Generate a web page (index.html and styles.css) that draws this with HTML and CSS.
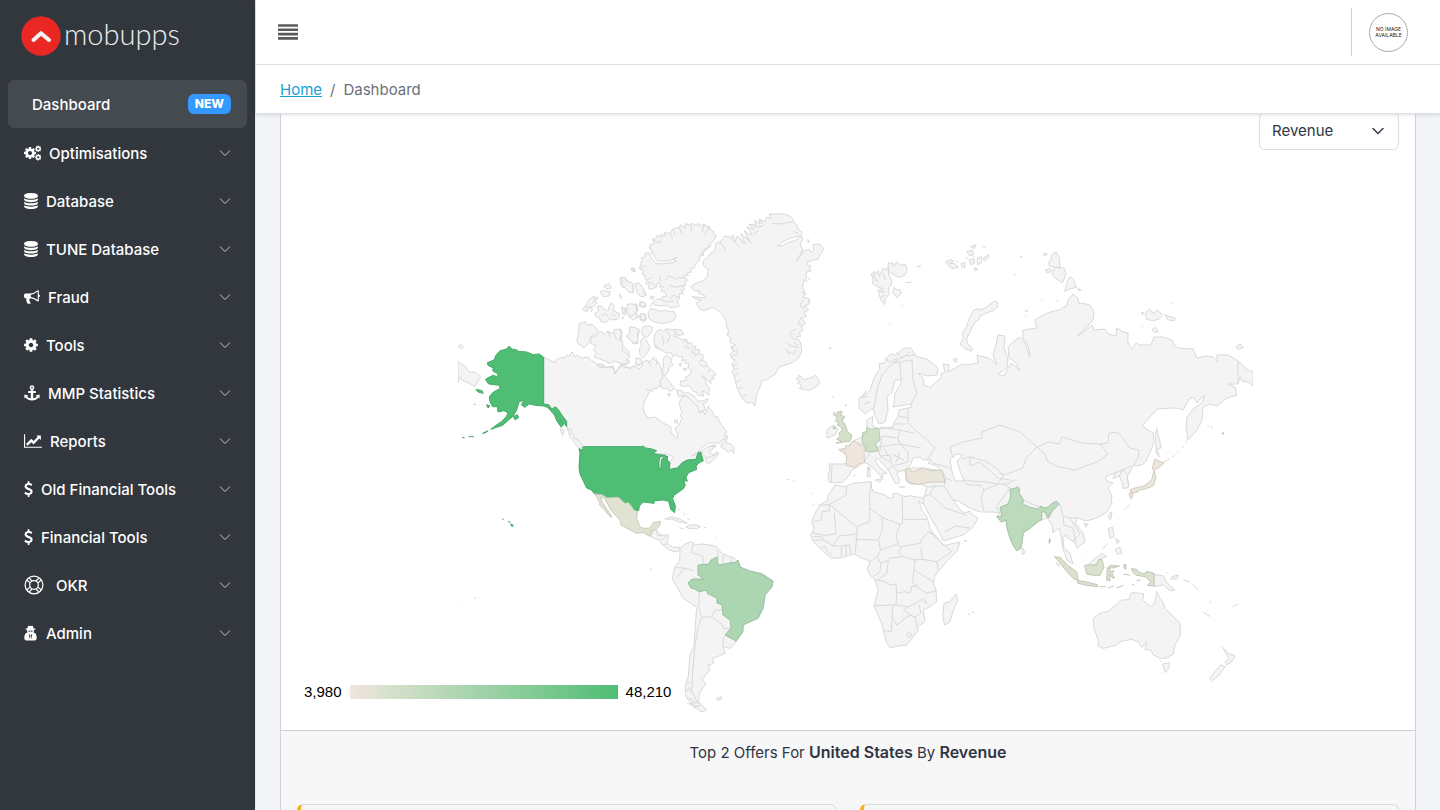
FILE: index.html
```html
<!DOCTYPE html>
<html lang="en">
<head>
<meta charset="utf-8">
<meta name="viewport" content="width=device-width, initial-scale=1">
<title>Mobupps Dashboard</title>
<link rel="stylesheet" href="styles.css">
</head>
<body>
<svg class="defs" aria-hidden="true">
  <symbol id="chev" viewBox="0 0 12 12"><path d="M1 3.500 6 8.500 11 3.500" fill="none" stroke="currentColor" stroke-width="1"/></symbol>
  <symbol id="cog" viewBox="128 0 1536 1792"><path d="M1152 896q0-106-75-181t-181-75-181 75-75 181 75 181 181 75 181-75 75-181zm512-109v222q0 12-8 23t-20 13l-185 28q-19 54-39 91 35 50 107 138 10 12 10 25t-9 23q-27 37-99 108t-94 71q-12 0-26-9l-138-108q-44 23-91 38-16 136-29 186-7 28-36 28h-222q-14 0-24.500-8.500t-11.500-21.500l-28-184q-49-16-90-37l-141 107q-10 9-25 9-14 0-25-11-126-114-165-168-7-10-7-23 0-12 8-23 15-21 51-66.500t54-70.500q-27-50-41-99l-183-27q-13-2-21-12.500t-8-23.500v-222q0-12 8-23t19-13l186-28q14-46 39-92-40-57-107-138-10-12-10-24 0-10 9-23 26-36 98.500-107.500t94.500-71.500q13 0 26 10l138 107q44-23 91-38 16-136 29-186 7-28 36-28h222q14 0 24.500 8.500t11.500 21.500l28 184q49 16 90 37l142-107q9-9 24-9 13 0 25 10 129 119 165 170 7 8 7 22 0 12-8 23-15 21-51 66.500t-54 70.500q26 50 41 98l183 28q13 2 21 12.500t8 23.500z"/></symbol>
  <symbol id="db" viewBox="128 0 1536 1792"><path d="M896 768q237 0 443-43t325-127v170q0 69-103 128t-280 93.500-385 34.500-385-34.500-280-93.500-103-128v-170q119 84 325 127t443 43zm0 768q237 0 443-43t325-127v170q0 69-103 128t-280 93.500-385 34.500-385-34.500-280-93.500-103-128v-170q119 84 325 127t443 43zm0-384q237 0 443-43t325-127v170q0 69-103 128t-280 93.500-385 34.500-385-34.500-280-93.500-103-128v-170q119 84 325 127t443 43zm0-1152q208 0 385 34.500t280 93.500 103 128v128q0 69-103 128t-280 93.500-385 34.500-385-34.500-280-93.500-103-128v-128q0-69 103-128t280-93.500 385-34.500z"/></symbol>
  <symbol id="usd" viewBox="384 0 1024 1792"><path d="M1362 1185q0 153-99.500 263.500t-258.500 136.500v175q0 14-9 23t-23 9h-135q-13 0-22.500-9.500t-9.500-22.500v-175q-66-9-127.500-31t-101.500-44.500-74-48-46.500-37.500-17.500-18q-17-21-2-41l103-135q7-10 23-12 15-2 24 9l2 2q113 99 243 125 37 8 74 8 81 0 142.500-43t61.500-122q0-28-15-53t-33.500-42-58.500-37.500-66-32-80-32.500q-39-16-61.500-25t-61.500-26.500-62.500-31-56.500-35.500-53.500-42.500-43.500-49-35.500-58-21-66.500-8.500-78q0-138 98-242t255-134v-180q0-13 9.500-22.500t22.500-9.500h135q14 0 23 9t9 23v176q57 6 110.500 23t87 33.500 63.500 37.500 39 29 15 14q17 18 5 38l-81 146q-8 15-23 16-14 3-27-7-3-3-14.500-12t-39-26.500-58.500-32-74.500-26-85.500-11.500q-95 0-155 43t-60 111q0 26 8.500 48t29.500 41.500 39.500 33 56 31 60.500 27 70 27.500q53 20 81 31.500t76 35 75.500 42.500 62 50 53 63.500 31.500 76.500 13 94z"/></symbol>
</svg>
<div class="app">
<aside class="sidebar">
  <a class="brand" href="#">
    <svg class="brand-mark" viewBox="0 0 40 40" aria-hidden="true"><circle cx="20" cy="20" r="19.700" fill="#e92824"/><path d="M12.500 24 20 17.200 28 24" fill="none" stroke="#f4f4f4" stroke-width="4" stroke-linecap="round" stroke-linejoin="round"/></svg>
    <span>mobupps</span>
  </a>
  <nav class="nav">
    <a class="item active" href="#"><span class="label">Dashboard</span><span class="badge">NEW</span></a>
    <a class="item" href="#"><svg class="ico w17" viewBox="0 0 17 16"><use href="#cog" x="-0.500" y="1" width="13" height="14"/><use href="#cog" x="11" y="0" width="6.500" height="7.500"/><use href="#cog" x="11" y="8.500" width="6.500" height="7.500"/></svg><span class="label">Optimisations</span><svg class="chev"><use href="#chev"/></svg></a>
    <a class="item" href="#"><svg class="ico w14"><use href="#db"/></svg><span class="label">Database</span><svg class="chev"><use href="#chev"/></svg></a>
    <a class="item" href="#"><svg class="ico w14"><use href="#db"/></svg><span class="label">TUNE Database</span><svg class="chev"><use href="#chev"/></svg></a>
    <a class="item" href="#"><svg class="ico w16" viewBox="0 0 1792 1792"><path d="M1664 640q53 0 90.500 37.500t37.500 90.500-37.500 90.500-90.500 37.500v384q0 52-38 90t-90 38q-417-347-812-380-58 19-91 66t-31 100.500 40 92.500q-20 33-23 65.500t6 58 33.500 55 48 50 61.500 50.500q-29 58-111.500 83t-168.500 11.500-132-55.500q-7-23-29.500-87.500t-32-94.500-23-89-15-101 3.500-98.500 22-110.500h-122q-66 0-113-47t-47-113v-192q0-66 47-113t113-47h480q435 0 896-384 52 0 90 38t38 90v384zm-128 604v-954q-394 302-768 343v270q377 42 768 341z"/></svg><span class="label">Fraud</span><svg class="chev"><use href="#chev"/></svg></a>
    <a class="item" href="#"><svg class="ico w14"><use href="#cog"/></svg><span class="label">Tools</span><svg class="chev"><use href="#chev"/></svg></a>
    <a class="item" href="#"><svg class="ico w16" viewBox="0 0 16 16"><path fill-rule="evenodd" d="M8 .3a2.300 2.300 0 0 1 1.200 4.300V6h2.600v2H9.200v5.300c1.600-.2 2.900-.9 3.500-1.800l-1.100-1.100 4-.9v4l-1.200-1c-1.300 1.900-3.500 3-6.400 3s-5.100-1.100-6.400-3l-1.200 1v-4l4 .9-1.100 1.100c.6.900 1.900 1.600 3.500 1.800V8H4.200V6h2.600V4.600A2.300 2.300 0 0 1 8 .3zm0 1.400a.9.900 0 1 0 0 1.800.9.900 0 0 0 0-1.800z"/></svg><span class="label">MMP Statistics</span><svg class="chev"><use href="#chev"/></svg></a>
    <a class="item" href="#"><svg class="ico w18" viewBox="0 0 2048 1792"><path d="M2048 1536v128h-2048v-1536h128v1408h1920zm-128-1248v435q0 21-19.500 29.500t-35.500-7.500l-121-121-633 633q-10 10-23 10t-23-10l-233-233-416 416-192-192 585-585q10-10 23-10t23 10l233 233 464-464-121-121q-16-16-7.500-35.500t29.500-19.500h435q14 0 23 9t9 23z"/></svg><span class="label">Reports</span><svg class="chev"><use href="#chev"/></svg></a>
    <a class="item" href="#"><svg class="ico w9"><use href="#usd"/></svg><span class="label">Old Financial Tools</span><svg class="chev"><use href="#chev"/></svg></a>
    <a class="item" href="#"><svg class="ico w9"><use href="#usd"/></svg><span class="label">Financial Tools</span><svg class="chev"><use href="#chev"/></svg></a>
    <a class="item okr" href="#"><svg class="ico w20" viewBox="0 0 20 20"><g fill="none" stroke="currentColor" stroke-width="1.200"><circle cx="10" cy="10" r="8.900"/><circle cx="10" cy="10" r="4.300"/><path d="M2.800 5 6 7.900M5 2.800 7.900 6M15 2.800 12.100 6M17.200 5 14 7.900M17.200 15 14 12.100M15 17.200 12.100 14M5 17.200 7.900 14M2.800 15 6 12.100"/></g></svg><span class="label">OKR</span><svg class="chev"><use href="#chev"/></svg></a>
    <a class="item" href="#"><svg class="ico w14" viewBox="0 0 14 16"><path fill-rule="evenodd" d="M4.500.8c.8-.5 1.300.3 2 .3s1.200-.8 2-.3c.6.4.9 1.600 1.100 2.500 1.200.2 2 .5 2 .8s-.8.700-1.700.8v1.700L9.500 7.400c2.300.3 3.200 2.600 3.200 5.700 0 1.600-.8 2.300-2 2.300H2.300c-1.200 0-2-.7-2-2.300 0-3.100.9-5.400 3.200-5.700L3.100 6.600V4.900C2.200 4.800 1.400 4.400 1.400 4.100s.8-.6 2-.8C3.600 2.400 3.900 1.200 4.500.8zM4.200 5.700l.5 1.100h1.100l.7-.8.7.8h1.100l.5-1.100zM4.800 9l.9 5.300.6-3.200L5.700 9.500zM8.200 9l-.9.500-.6 1.600.6 3.200z"/></svg><span class="label">Admin</span><svg class="chev"><use href="#chev"/></svg></a>
  </nav>
</aside>

<div class="wrapper">
  <header class="header">
    <div class="topbar">
      <button class="toggler" type="button" aria-label="Toggle menu"><svg viewBox="0 0 20 16"><path d="M0 1.500h20M0 5.800h20M0 10.100h20M0 14.400h20" stroke="currentColor" stroke-width="2.600"/></svg></button>
      <div class="account"><button class="avatar" type="button">NO IMAGE<br>AVAILABLE</button></div>
    </div>
    <nav class="crumbs" aria-label="Breadcrumb"><a href="#">Home</a><span class="sep">/</span><span>Dashboard</span></nav>
  </header>

  <main class="content">
    <section class="card">
      <div class="card-body">
        <select class="metric" aria-label="Metric"><option>Revenue</option></select>
        <div class="map">
<svg class="world" viewBox="297 150 1102 564" role="img" aria-label="Revenue by country">
<defs><clipPath id="edge"><path d="M458 213h795v501H458z"/></clipPath></defs>
<g clip-path="url(#edge)">
<!-- Canada, mainland -->
<path class="land" d="M543.700 357.300 548 359 555 362.500 556 360 562 357 564 358 567 355 569 356 572 352 575 357 577 355 581 358 588 357 592 361 595 362 597 365 600 367 610 367 613 368 615 374 617 370 620 365 624 367 630 368 634 366 640 369 643 362 647 360 650 362 653 358 656 361 659 363 662 372 663 380 661 388 659 385 657 389 653 388 649 393 645 400 643 408 645 414 648 418 655 417 663 423 671 427 671 433 674 435 677 439 678 435 675 428 679 425 682 418 680 415 682 412 679 403 681 399 683 396 688 396 692 398 697 405 700 413 703 411 705 415 708 406 712 411 715 417 717 416 720 423 727 432 724 434 727 437 722 440 720 443 708 443 700 450 692 456 699 453 707 447 715 445 713 449 709 451 713 455 716 452 719 453 714 458 707 461 705 457 702 452 698 454 695 460 687 460 680 466 670 470 668 464 674 457 667 454 660 454 650 452 643 447 583 447 578 445 575 442 572 436 568 431 567 427 565 420 557 410 554 408 551 409 543.700 404Z"/>
<g transform="translate(620 200) scale(.33333)">
<path class="land" d="M302 740 308 728 316 716 320 705 324 710 317 728 332 732 342 742 341 760 333 750 325 758 318 750ZM258 775 275 768 295 762 284 775 268 790 258 788ZM270 738 290 738 282 742Z"/>
<!-- Ellesmere and Axel Heiberg -->
<path class="land" d="M90 135 103 130 98 118 113 112 110 106 125 112 122 102 137 108 132 98 150 100 158 87 178 82 182 74 194 84 196 71 213 76 215 70 228 76 236 70 240 78 254 72 258 80 268 80 272 90 282 94 280 102 289 108 283 120 270 132 262 145 248 158 252 166 240 168 238 182 228 190 222 204 210 208 214 216 200 220 206 226 190 226 196 235 203 240 195 246 198 256 188 258 194 268 183 272 190 280 176 282 180 292 172 306 178 318 165 322 150 322 142 316 128 318 104 316 98 308 110 298 122 298 126 290 140 290 136 278 122 272 130 262 116 260 122 252 112 248 108 262 92 268 84 264 88 256 78 250 80 240 74 236 76 226 66 224 70 214 58 206 62 196 60 190 68 180 64 174 76 170 74 160 86 158 90 166 96 178 106 188 120 192 140 190 160 188 170 184 160 178 172 172 150 182 128 184 112 182 104 174 102 164 92 158 100 152 88 146Z"/>
<path class="land" d="M92 325 108 330 122 334 134 330 150 336 162 334 168 346 162 360 148 368 120 370 98 364 86 354 84 340ZM60 305 74 308 80 318 70 322 58 318ZM60 342 74 342 80 356 72 366 60 360ZM48 250 60 252 66 266 74 276 80 286 66 282 62 272 52 270ZM0 234 16 234 22 244 36 250 40 262 40 278 28 276 20 264 8 262 2 252ZM36 204 44 206 45 216 38 214ZM28 314 50 312 54 330 48 342 54 352 38 360 26 350 32 342 22 334ZM6 322 18 326 22 340 14 346 8 340ZM92 288 102 290 100 298 92 296Z"/>
<path class="line" d="M98 118 112 128 126 124M158 87 164 104M178 82 186 104M213 76 214 94M254 72 246 96M268 80 254 104M150 100 158 116M108 262 98 250 84 246M196 235 176 232 164 238M188 258 168 262 150 256M180 292 160 286 150 296M122 298 136 306 160 304M98 308 90 320M60 206 78 196M118 228 122 244M136 240 146 228 160 232M80 240 96 232M240 168 254 148 272 138"/>
<!-- Baffin -->
<path class="land" d="M112 392 124 388 132 394 138 386 156 390 168 388 186 394 190 402 176 406 166 402 162 408 176 412 188 420 200 418 204 430 214 428 218 440 228 438 226 448 240 450 236 460 248 464 250 476 244 480 258 486 262 498 272 508 284 518 286 526 278 528 282 536 270 538 274 550 262 542 254 532 244 526 256 540 258 552 268 564 266 586 254 576 246 572 252 588 236 586 228 576 220 574 212 562 204 556 196 560 180 556 182 544 200 540 196 532 210 524 214 512 204 502 206 490 196 490 196 478 186 484 188 470 176 470 166 464 158 470 154 458 142 460 128 452 108 444 104 434 102 420 104 404ZM124 404 132 420 130 436"/>
<path class="land" d="M70 380 86 378 98 382 94 396 82 412 70 408 64 394ZM72 412 82 426 90 440 86 452 70 474 60 464 58 448 64 436 62 420ZM28 388 42 382 58 390 56 402 52 416 54 430 40 432 34 422 20 410 34 404ZM0 386 6 396 4 420 8 436 22 448 28 462 18 472 30 486 20 494 0 492ZM48 474 62 476 68 488 56 494 46 490ZM130 475 140 466 156 476 152 486 160 494 148 502 144 516 134 528 126 516 130 500ZM120 540 136 530 144 540 164 566 150 574 138 564 128 566 122 554ZM170 570 186 572 190 580 205 578 222 588 232 604 250 602 264 596 260 608 250 610 256 630 238 636 232 618 220 610 205 592 190 586 176 590ZM142 582 152 580 148 590ZM164 660 172 660 172 670 164 668ZM176 492 184 490 182 500ZM190 506 200 504 196 514ZM162 388 184 390 190 404 172 406Z"/>
<path class="line" d="M200 418 192 428M204 430 194 440 212 446M226 448 214 456 230 464M236 460 224 470M250 476 238 484M262 498 248 500 236 490M272 508 262 518M78 568 100 574M104 434 118 446M140 392 150 410 140 430M84 482 94 500M100 470 112 480 108 496"/>
<!-- Greenland -->
<path class="land" d="M212 260 228 250 248 242 262 232 264 210 250 196 248 184 262 172 270 162 286 150 288 130 300 126 316 108 332 112 340 106 346 124 352 108 376 132 362 100 388 124 372 92 390 104 396 102 380 80 402 88 386 72 408 76 404 62 420 70 418 58 436 64 440 52 452 56 448 42 490 42 510 48 520 58 520 66 530 74 536 88 548 98 540 108 520 112 502 118 484 128 472 138 490 136 504 128 526 122 544 108 548 118 540 134 548 150 530 184 552 152 568 148 574 158 582 150 578 134 600 132 612 148 600 164 594 178 578 180 570 186 564 182 560 194 574 200 566 206 574 212 560 216 558 236 552 240 548 262 556 280 548 292 566 296 568 312 556 318 566 330 552 336 560 350 544 352 556 370 545 378 548 392 538 398 542 410 528 408 540 424 544 440 545 456 536 474 520 486 502 494 478 500 464 524 450 532 442 540 426 540 422 556 410 584 404 618 396 606 384 610 370 600 362 588 352 566 346 544 344 528 336 518 342 506 336 492 346 480 336 476 330 462 340 452 332 440 348 436 330 426 332 412 322 406 326 392 320 380 318 362 304 338 278 322 252 332 238 326 228 308 244 300 226 296 216 290 256 294 256 288 236 280 240 274 222 272Z"/>
<path class="line" d="M300 126 318 152M332 112 356 140M378 104 396 132M352 108 370 130M398 72 410 82 428 78 436 70M420 60 428 72M456 70 478 72 500 68 518 66M520 94 534 100M508 400 520 416 532 420M500 430 514 438 536 442M506 456 520 462 528 450M335 470 352 462 350 446M338 500 352 492M340 528 354 520M546 276 560 284M550 322 562 312M246 160 258 150 274 136M552 240 566 246M548 300 540 316 552 326M544 352 534 372 546 378M528 386 512 396 520 404M498 446 508 464M522 428 534 436M336 440 344 456M344 510 354 506M348 546 360 540M356 566 368 562M366 590 378 584M400 104 416 92"/>
<!-- Iceland -->
<path class="land" d="M528 536 540 530 536 526 546 532 552 540 560 536 572 534 586 526 592 534 600 546 592 558 566 572 554 568 538 566 544 556 532 548 540 544Z"/>
<path class="land" d="M628 448 634 444M638 590 642 592M560 120 568 120 564 130M562 234 572 238M566 296 570 306"/>
</g>
<!-- western Arctic islands -->
<g transform="translate(450 200) scale(.33333)">
<path class="land" d="M388 370 406 366 412 374 428 374 446 392 432 406 420 414 416 430 402 444 384 430 380 420 386 400ZM424 408 436 412 444 400 456 394 462 404 474 394 490 402 494 388 510 388 514 402 508 420 518 426 516 450 530 462 540 470 528 480 534 488 516 492 496 484 478 490 462 482 446 476 432 470 440 458 430 450 438 436 422 430ZM398 326 408 316 416 300 428 290 444 294 436 304 440 312 428 322 420 318 412 334 402 332ZM434 340 446 334 442 320 454 318 462 328 474 332 478 318 484 308 492 318 490 332 510 342 506 356 490 360 478 356 468 368 452 364 448 352 438 350ZM460 260 476 250 484 264 470 266ZM450 276 458 272 482 276 476 288 460 290ZM512 232 526 232 528 242 548 250 550 276 538 278 526 264 516 256 518 244ZM556 250 568 250 580 266 586 288 572 290 560 274ZM544 204 552 208 552 216 546 212ZM508 282 516 296 510 290ZM538 380 554 382 566 388 562 404 564 420 556 432 540 420 530 406 540 400ZM532 312 548 312 560 320 558 340 540 350 530 334ZM516 320 524 326 526 338 518 340ZM448 490 462 494 458 502 446 498ZM572 306 584 308 586 320 570 318ZM572 340 584 344 586 360 572 358ZM420 322 428 328 422 338M516 348 522 354 514 356M562 344 568 352"/>
<path class="line" d="M436 294 428 310M404 318 414 324M454 346 468 342 474 350M484 340 496 348M494 402 500 418M474 394 480 410M440 490 448 500 470 502 490 498 496 520 504 506 520 496 540 506 556 494 570 498"/>
<path class="land" d="M24 440 32 432 40 440 36 446ZM24 484 44 498 58 516 74 516 92 530 74 560 58 550 36 540 30 530 24 548Z"/>
<!-- Alaska -->
<path class="us" d="M281 472 268 462 250 464 230 456 206 454 196 448 186 448 178 438 168 448 150 452 138 466 132 480 112 488 114 496 130 504 128 512 144 522 142 530 128 526 106 538 116 552 148 556 150 566 130 576 118 590 120 606 128 620 142 620 144 636 162 632 174 638 170 648 156 664 138 676 122 688 140 682 158 676 180 656 190 648 200 630 208 604 222 602 214 614 224 622 238 612 256 616 281 618 292 622 302 632 314 646 320 662 334 682 342 670 350 680 350 664 336 646 326 630 316 620 306 628 296 614 281 612ZM190 650 202 644 206 652 196 660ZM78 568 96 572 100 580 84 576ZM98 700 114 692 108 698ZM36 712 44 714M56 710 72 710M72 612 76 614M110 614 120 618 114 624ZM312 640 322 650M326 664 336 660"/>
<path class="land" d="M352 684 366 690 362 700 374 706 370 714 384 720 394 732 400 742 388 744 374 730 360 712ZM330 686 342 690 338 708Z"/>
</g>
<!-- Russia's Arctic islands -->
<g transform="translate(820 230) scale(.33333)">
<path class="land" d="M154 132 164 124 160 140 174 122 178 140 190 114 196 120 204 112 206 136 216 150 214 166 206 172 208 192 196 206 194 224 184 212 178 196 174 180 190 176 172 170 156 160 160 150ZM204 100 218 98 220 110 230 96 242 106 256 102 262 122 254 136 236 142 220 134 206 124ZM222 172 232 180 240 178 244 190 230 204 226 196 218 190ZM376 96 392 88 400 94 388 100 404 100 414 112 396 116ZM440 66 456 60 460 72 450 78ZM452 50 468 44 462 56ZM448 90 462 86 464 100 452 104ZM472 84 484 80 484 98 472 104ZM490 84 506 74 504 84 492 92ZM424 100 436 98 434 112 426 112ZM462 114 474 118 464 122ZM290 112 302 106 296 110M256 158 276 156M246 228 250 226M208 280 212 282M27 358 32 352M38 500 42 502M600 80 608 82M582 132 588 136M488 50 498 52M74 528 80 524"/>
<path class="line" d="M164 140 172 156M190 130 196 150M178 186 194 184M182 200 196 196M438 82 446 88M456 76 464 80M408 92 412 98M616 240 622 244M616 258 620 262"/>
<path class="land" d="M532 216 534 230 520 242 496 250 480 258 478 268 466 276 456 290 450 308 440 324 442 340 458 358 454 364 436 356 420 342 430 328 428 308 440 290 444 276 450 260 462 240 476 236 480 240 496 234 512 222 522 214ZM400 388 410 386 410 396 402 396Z"/>
</g>
<g transform="translate(1020 240) scale(.33333)">
<path class="land" d="M86 66 94 58 94 46 108 36 118 52 120 84 106 82 88 78ZM98 90 110 82 132 84 138 102 128 128 108 116 96 104ZM76 90 90 86 92 96 80 98ZM134 154 142 124 150 110 160 118 170 142 152 146ZM70 40 82 42 74 48ZM174 146 184 150 176 152ZM376 218 388 208 394 212 402 220 412 208 428 226 416 238 398 242 380 238ZM434 224 450 230 466 234 462 242 444 240ZM396 270 406 262 416 276 402 276ZM364 216 370 218 368 224ZM648 322 660 312 670 322 654 328ZM62 182 68 178M106 184 112 182M14 214 24 212M452 192 456 190M366 258 370 262M0 50 6 52M562 556 568 562M574 560 578 566"/>
<path class="land" d="M410 565 414 580 420 606 424 624 412 626 418 650 408 640 408 608 406 590ZM432 666 450 656M456 652 464 646M472 640 476 636M486 624 492 616M496 608 502 602"/>
</g>
<!-- Eurasia -->
<path class="land" d="M915 355 918 357 927 359 938 368 937 375 928 376 918 373 923 378 924 385 930 388 935 383 942 377 941 374 945 372 943 364 949 365 948 372 957 367 962 364 967 365 978 363 977 355 988 358 993 361 997 365 993 355 996 345 998 335 1005 336 1004 347 1008 360 1007 368 998 374 1004 376 1011 363 1016 367 1020 371 1015 362 1009 358 1008 347 1013 342 1020 337 1025 343 1030 357 1028 345 1023 338 1023 330 1037 328 1035 320 1040 317 1047 313 1054 311 1060 310 1067 305 1068 300 1073 294 1078 298 1079 304 1082 303 1090 305 1094 312 1093 320 1087 327 1077 336 1085 331 1092 325 1094 330 1105 329 1108 334 1116 336 1117 328 1123 332 1128 333 1128 343 1132 349 1136 343 1140 345 1151 345 1154 337 1163 337 1172 340 1174 345 1178 348 1193 349 1197 358 1205 356 1213 357 1217 362 1217 355 1228 355 1238 361 1248 370 1253 372 1253 386 1248 382 1242 381 1240 377 1238 384 1228 384 1235 387 1237 395 1227 398 1217 406 1210 404 1203 407 1202 420 1197 430 1188 440 1186 427 1187 417 1194 408 1202 403 1205 395 1201 398 1197 403 1194 398 1190 398 1183 410 1177 408 1172 408 1157 409 1150 417 1142 426 1148 430 1153 433 1154 442 1150 453 1146 461 1142 465 1133 466 1130 472 1127 477 1129 485 1125 489 1123 485 1123 478 1120 475 1113 479 1115 473 1105 477 1107 481 1113 483 1108 487 1112 497 1111 500 1112 503 1107 512 1097 518 1086 521 1078 518 1075 523 1083 533 1085 542 1077 548 1075 543 1068 538 1066 535 1063 538 1064 548 1070 553 1073 564 1067 560 1063 549 1061 535 1059 528 1053 533 1052 525 1047 518 1042 520 1040 521 1023 533 1022 543 1017 551 1012 540 1006 520 1002 522 997 516 1000 513 993 512 980 512 970 508 958 501 953 500 957 505 961 511 965 513 970 511 970 513 978 518 973 527 963 535 943 541 942 537 932 520 923 503 924 497 927 487 920 484 910 484 906 480 905 470 912 468 923 468 942 471 937 466 928 463 932 460 923 460 920 457 913 458 910 466 905 470 898 472 897 475 900 480 898 484 895 483 892 477 888 470 882 463 877 458 875 459 878 466 887 473 883 474 882 480 880 475 874 469 870 465 864 462 859 466 852 470 848 477 843 482 835 483 829 482 828 474 830 470 829 464 843 464 847 463 846 455 839 450 846 448 853 441 862 437 864 432 867 431 867 420 873 416 872 425 878 429 893 427 894 422 898 417 899 410 912 407 911 404 893 407 894 403 895 393 900 385 902 380 895 380 892 392 887 397 888 410 885 422 879 424 875 415 873 408 865 414 859 408 859 398 864 395 870 390 873 381 877 373 880 369 879 364 884 363 890 354 896 355 904 348 911 348Z"/>
<path class="water" d="M950 459 957 454 963 455 957 461 960 471 964 481 955 481 952 472Z"/>
<path class="line" d="M874 408 877 390 882 375 893 363 900 362 901 380M893 363 905 356 915 355M900 362 912 360 913 380 917 393 911 404M908 408 908 423 915 430 925 438 935 448 927 460M899 416 908 418M894 424 906 424M880 427 900 430 898 438 882 436M900 430 914 433M898 438 900 444 920 448M882 436 880 451 870 452 864 463M870 452 878 447 900 444 908 452 908 462 893 466M878 447 880 456 890 455 892 466 888 470M893 466 898 472M880 456 890 462M892 454 904 460M862 437 867 442 864 445 862 449M853 441 860 444M832 465 831 483M953 458 950 447 963 442 982 438 982 432 1000 425 1020 432 1037 447 1048 442 1059 444 1062 437 1076 441 1082 443 1100 444 1108 443 1109 433 1117 432 1122 437 1130 448 1139 450 1138 458 1133 466M1037 447 1045 454 1047 461 1056 466 1075 470 1085 466 1097 462 1108 454 1100 444M1037 447 1026 458 1023 468 1004 475 999 473M962 459 970 457 985 461 992 465 1004 475M970 457 970 466 980 462 998 478 1010 480M1004 475 998 484 986 482 972 481 964 480M964 481 968 485 980 485 984 490 981 498 984 511M984 490 998 484 1007 484 1015 480M1000 513 996 507 1010 488 1003 484M942 471 946 478 944 486 927 487M946 478 952 481M935 485 930 494 924 497M944 486 953 500M930 494 945 508 966 515M945 532 955 526 970 528M933 463 947 467 950 470M1023 500 1037 506 1040 508M1037 506 1047 508M1060 504 1063 516 1070 518 1078 518M1063 516 1064 525 1073 528 1076 543M1070 518 1080 534 1072 542M1115 473 1131 466M1123 478 1128 476M1238 361 1238 384M866 390 862 398 868 396M864 404 870 402M884 358 890 362 898 358M896 352 902 358 910 352M884 448 888 456M900 452 896 462M874 446 868 450"/>
<!-- Africa and Madagascar -->
<g transform="translate(790 380) scale(.33333)">
<path class="land" d="M135 315 165 320 190 310 243 305 245 325 250 335 285 345 300 355 310 352 308 342 320 340 345 350 360 347 385 352 398 352 402 365 396 372 385 362 396 390 412 415 420 445 430 460 448 480 460 497 490 490 510 487 500 515 470 545 445 573 434 590 430 610 438 630 440 665 420 680 400 690 405 725 385 738 382 755 350 795 330 797 300 803 288 785 285 770 275 730 252 677 265 630 255 600 240 585 232 568 240 545 228 538 215 535 195 522 180 525 155 533 125 535 100 515 90 505 68 482 62 465 72 445 65 425 78 395 90 375 112 362 115 345ZM498 642 503 660 490 690 480 725 464 735 458 710 462 670 480 665Z"/>
<path class="line" d="M170 318 168 345 118 374M118 374 90 376M118 374 118 392 96 396 94 420 70 425M118 374 200 440 240 425M133 397 138 462 102 466 68 458M200 440 202 462 148 468 140 480 128 498 152 498M243 306 238 355 240 385 276 412 330 433 338 430 337 350M338 418 412 418M276 412 278 448 265 478 272 510 325 490 318 468 330 433M202 462 195 520M195 478 262 480M320 495 335 500 390 490 398 475 415 455 430 460M335 500 325 515 340 530 375 540 398 538 392 505M398 538 440 545 485 515 462 495 430 465 415 455M440 545 445 573M375 540 372 570 430 605M372 570 368 605 378 620 410 640 440 632M295 535 340 530M272 510 262 530 240 545M262 530 272 550 295 540 290 580 262 600 255 600M272 550 270 575 250 590M262 600 285 605 300 615 318 612 320 640 345 635 360 640 365 620 385 615M320 640 318 675 252 677M318 675 355 680 380 668 400 655M308 680 306 710 304 755 283 752M306 710 320 735 345 715 362 705 375 712 382 745M355 680 340 690 362 705 375 712 392 700 388 675M350 762 358 756 366 762 360 772 352 770ZM154 530 155 498 178 495 183 524M168 528 168 498M70 470 95 470 100 480 68 482M100 480 115 488 128 498M90 505 105 500 112 515 125 525M240 425 238 385M405 655 410 672 395 660"/>
<path class="line" d="M8 300 12 302M64 340 68 342M68 374 72 374M84 372 88 374M524 484 530 482M536 702 540 704M546 698 550 696M326 320 342 322M232 276 238 280 238 290 232 286ZM256 300 270 298 272 306ZM190 288 196 286"/>
</g>
<!-- Central and South America -->
<g transform="translate(450 420) scale(.33333)">
<path class="land" d="M598 348 608 335 616 328 632 345 655 345 652 372 668 382 690 382 692 392 672 395 655 388 638 375 628 360 606 352ZM645 297 665 290 690 298 712 310 688 306 668 298ZM708 322 716 316 734 314 752 320 740 326 722 326ZM688 324 700 326M762 322 770 324M684 266 692 272M700 280 706 284M712 296 718 300M798 348 800 350M600 446 604 448"/>
<path class="line" d="M620 330 622 345 636 348M652 345 634 362M652 372 640 374"/>
</g>
<g transform="translate(640 530) scale(.33333)">
<path class="land" d="M120 55 135 42 155 35 165 45 185 42 210 45 230 50 245 70 265 78 285 85 298 100 305 120 330 125 365 130 400 155 375 195 370 235 355 265 310 285 308 305 285 340 270 355 250 350 255 370 220 385 220 400 205 405 210 420 185 450 198 460 178 490 175 515 200 540 182 546 170 535 158 530 150 515 138 500 135 470 145 440 150 375 162 350 165 300 170 232 130 205 97 145 105 110 118 95 120 75Z"/>
<path class="land" d="M230 505 245 500 242 510 232 510ZM30 118 34 120M228 18 230 20"/>
<path class="line" d="M160 38 155 68 188 78 190 105M232 60 235 90M250 75 250 100M275 80 272 100M104 112 136 115 108 142M136 115 160 122M178 185 176 232 185 262 175 290 166 340 160 400 155 480 170 515 180 520M185 262 215 260 225 240 248 240M215 260 248 285 250 297 272 292M250 320 248 350M150 505 165 520M145 470 155 490M142 520 178 530M138 460 148 456M136 482 148 478M146 502 158 510M152 520 172 518M164 532 180 526"/>
</g>
<!-- islands of Asia and Oceania -->
<g transform="translate(960 460) scale(.33333)">
<path class="land" d="M400 475 420 460 450 452 460 440 472 432 484 420 498 420 508 416 512 400 526 398 552 402 548 420 572 440 584 430 590 394 600 415 608 425 615 445 630 460 660 490 662 525 645 555 640 582 618 595 600 595 580 585 572 570 555 570 560 548 545 562 535 545 515 538 480 545 468 556 430 565 414 558 416 545 402 505ZM608 612 628 608 626 625 616 638ZM788 562 802 578 825 588 818 602 800 615 796 605 806 595ZM782 615 795 620 775 648 758 662 748 655 765 635ZM583 343 610 348 622 370 645 390 630 392 610 375 583 380ZM636 350 656 345 650 356 632 358ZM388 310 425 280 440 290 418 296 410 312 390 318ZM445 205 458 202 462 230 450 235ZM468 235 480 245 470 250ZM466 268 480 262 486 280 472 282ZM448 160 456 156 452 180 446 172ZM372 190 384 192 378 202ZM185 262 196 275 188 285ZM486 30 500 40 506 82 490 86 486 65 478 50ZM428 268 442 250M670 360 690 366M696 370 716 392M748 422 754 430M730 456 750 470M818 440 834 432M24 462 30 463M38 458 42 458M494 148 510 134M742 704 746 702M696 744 698 746M12 242 20 242M620 338 624 338M754 668 758 666M598 602 604 604"/>
</g>
<path class="land" d="M827 430 833 425 838 429 835 435 827 438ZM868 468 870 468 870 477 867 476ZM900 487 905 487M787 479 790 480M851 465 856 463M1152 452M455 604 459 604M474 598 476 598"/>
<!-- Lower 48 with the Great Lakes, Hawaii -->
<g transform="translate(450 420) scale(.33333)">
<path class="us" d="M387 86 398 90 400 80 575 80 580 78 586 84 602 86 620 92 608 100 628 104 648 106 630 112 627 125 627 145 632 147 634 120 640 112 652 108 652 120 660 128 658 148 682 144 696 128 712 120 738 118 744 98 752 96 760 122 748 128 738 138 740 148 716 158 708 172 712 184 700 180 706 196 700 206 672 226 668 236 676 258 674 278 662 268 656 244 640 240 614 242 612 250 580 246 568 258 566 272 552 270 536 248 524 250 506 232 472 234 456 224 434 222 424 210 410 204 390 162 387 140 390 100ZM156 296 161 299M174 304 182 308M182 312 190 316 186 320ZM700 170 702 190"/>
<path class="mx" d="M434 222 456 224 472 234 506 232 524 250 536 248 552 270 562 276 560 296 570 320 580 325 600 324 610 308 632 304 628 318 616 330 604 332 606 342 598 348 580 338 560 340 514 316 510 300 484 272 462 232 452 232 456 246 486 290 482 292 462 268 448 254 450 248Z"/>
</g>
<path class="us guam" d="M1222.500 433.500h1"/>
<path class="br" d="M704 579 698 575 698 565 709 564 711 560 717 557 718 565 736 562 738 560 740 567 750 571 762 574 773 581 772 587 765 595 763 608 758 618 743 625 743 632 736 641 725 635 731 628 730 620 723 615 722 605 717 603 717 598 708 594 706 590 699 592 695 589 691 588 688 583 692 579Z"/>
<g transform="translate(790 380) scale(.33333)">
<path class="gb" d="M138 190 155 184 140 178 150 170 148 158 158 150 150 138 142 136 146 128 136 122 142 114 136 108 142 96 156 94 152 106 164 110 156 124 164 130 172 154 186 166 180 184 160 186ZM130 140 138 142 134 148 128 144ZM130 100 134 96 132 108M166 74 169 78"/>
<path class="fr" d="M146 208 168 206 166 198 180 196 190 182 205 192 228 200 222 218 224 248 205 252 196 262 168 256 170 228 162 214ZM234 262 236 258 236 270Z"/>
<path class="de" d="M218 158 230 156 230 142 242 148 266 144 270 180 256 190 264 212 240 216 226 212 228 200 216 190Z"/>
<path class="tr" d="M346 270 356 264 366 276 400 264 424 272 454 270 466 306 420 306 384 314 352 306Z"/>
</g>
<path class="jp" d="M1155 459 1159 461 1164 463 1157 469 1152 469ZM1154 470 1156 478 1153 486 1145 489 1139 490 1132 494 1130 490 1135 488 1144 486 1148 483 1152 479ZM1131 492 1133 496 1131 499 1129 494ZM1136 492 1139 492"/>
<g transform="translate(960 460) scale(.33333)">
<path class="in" d="M150 88 166 84 172 80 178 86 178 100 190 120 188 132 210 142 238 148 242 138 250 144 264 142 276 130 290 124 298 132 286 144 276 154 266 174 260 170 256 156 246 156 244 180 236 182 214 202 190 218 186 246 182 266 170 272 160 258 148 230 140 200 138 180 124 186 110 170 126 168 120 142 144 132 152 110ZM268 236 271 240 268 250Z"/>
<path class="id" d="M284 290 300 292 326 318 350 336 355 360 342 358 320 334 306 316ZM352 362 380 366 412 374 414 380 380 376 354 370ZM374 316 388 314 408 316 416 300 426 298 432 322 420 346 400 346 380 342ZM442 324 452 316 478 318 460 324 448 324 450 336 462 332 456 340 464 354 456 352 450 344 450 362 440 360ZM492 314 498 314 498 328 492 324ZM514 326 530 328 536 336 552 342 560 334 582 340 582 378 562 376 572 366 556 350 530 346 520 338ZM420 380 438 380M444 384 462 378M470 384 490 376M490 342 510 346M288 308 300 318M516 372 524 376M530 362 542 360M368 298 370 300"/>
</g>
</g>
</svg>
        <div class="legend"><span>3,980</span><span class="ramp"></span><span>48,210</span></div>
        </div>
      </div>
      <div class="card-footer">
        <p class="offers-title">Top 2 Offers For <b>United States</b> By <b>Revenue</b></p>
        <div class="offers"><div class="offer"></div><div class="offer"></div></div>
      </div>
    </section>
  </main>
</div>
</div>
</body>
</html>
```
FILE: styles.css
```css
*, *::before, *::after { box-sizing: border-box; }
body {
  margin: 0;
  background: #f3f4f7;
  color: #2f353f;
  font: 15px/24px Inter, "Liberation Sans", sans-serif;
}
a { color: inherit; text-decoration: none; }
button { font: inherit; color: inherit; padding: 0; cursor: pointer; }
.defs { position: absolute; width: 0; height: 0; }
.app { display: flex; height: 100vh; overflow: hidden; }

.sidebar {
  flex: 0 0 256px;
  background: #32363d;
  border-right: 1px solid #e3e6ec;
  color: #fff;
}
.brand {
  display: flex;
  align-items: center;
  gap: 3px;
  height: 72px;
  padding-left: 21px;
  font: 300 29px/32px Lato, sans-serif;
  color: #eee;
}
.brand span { padding-bottom: 4px; }
.brand-mark { width: 40px; height: 40px; }
.nav { display: flex; flex-direction: column; padding: 8px; }
.item {
  display: flex;
  align-items: center;
  gap: 8px;
  height: 48px;
  padding: 0 16px;
  font-weight: 500;
  border-radius: 6px;
}
.item.active {
  justify-content: space-between;
  margin-bottom: 1px;
  padding-left: 24px;
  background: #454950;
}
.item.okr { gap: 12px; }
.label { padding-top: 2px; }
.badge {
  padding: 0 7px;
  border-radius: 6px;
  background: #39f;
  font-size: 12px;
  font-weight: 800;
  line-height: 20px;
}
.ico { height: 16px; fill: currentColor; flex: none; }
.w9 { width: 9px; }
.w14 { width: 14px; }
.w16 { width: 16px; }
.w17 { width: 17px; }
.w18 { width: 18px; }
.w20 { width: 20px; height: 20px; }
.chev { width: 12px; height: 12px; margin-left: auto; color: #c4c6c9; }

.wrapper { flex: 1; min-width: 0; display: flex; flex-direction: column; }
.header {
  position: relative;
  z-index: 2;
  background: #fff;
  border-bottom: 1px solid #dbdfe6;
  box-shadow: 0 1px 4px rgba(0, 0, 0, .12);
}
.topbar {
  display: flex;
  justify-content: space-between;
  align-items: center;
  height: 65px;
  padding: 0 32px 0 22px;
  border-bottom: 1px solid #dbdfe6;
}
.toggler { height: 18px; border: 0; background: none; color: #5a5a5a; }
.toggler svg { display: block; width: 20px; height: 16px; }
.account {
  display: flex;
  align-items: center;
  height: 48px;
  padding-left: 17px;
  border-left: 1px solid #cfd2d6;
}
.avatar {
  width: 39px;
  height: 39px;
  border: 1px solid #aaa;
  border-radius: 50%;
  background: #fff;
  color: #222;
  font-size: 5px;
  line-height: 6px;
}
.crumbs {
  display: flex;
  gap: 8px;
  height: 48px;
  padding: 0 24px;
  line-height: 50px;
  color: #6b7079;
}
.crumbs a { color: #1b9fcf; text-decoration: underline; }

.content { padding: 0 24px; }
.card {
  margin-top: -19px;
  border: 1px solid #cfd2d8;
  background: #fff;
}
.card-body { padding: 16px; }
.metric {
  display: block;
  width: 140px;
  height: 38px;
  margin-left: auto;
  padding: 0 12px;
  border: 1px solid #d8dde6;
  border-radius: 6px;
  appearance: none;
  color: #2f353f;
  font: inherit;
  background: #fff url("data:image/svg+xml,%3Csvg xmlns='http://www.w3.org/2000/svg' viewBox='0 0 12 12'%3E%3Cpath d='M1 3.500 6 8.500 11 3.500' fill='none' stroke='%23323a49' stroke-width='1.500' stroke-linecap='round'/%3E%3C/svg%3E") no-repeat right 14px center / 12px 12px;
}
.map { position: relative; }
.world { display: block; width: 100%; }
.world path { stroke-width: 1px; vector-effect: non-scaling-stroke; stroke-linejoin: round; }
.land { fill: #f4f4f4; stroke: #d9d9d9; }
.line { fill: none; stroke: #d9d9d9; }
.water { fill: #fff; stroke: #d9d9d9; }
.us { fill: #4fbd74; stroke: #46aa68; }
.world .guam { stroke-width: 2px; }
.mx { fill: #e0e3d2; stroke: #c9ccbd; }
.br { fill: #acd5b2; stroke: #98c09f; }
.gb { fill: #d5dfca; stroke: #bcc8b1; }
.fr { fill: #eee6dc; stroke: #d9cec4; }
.de { fill: #cfdfc8; stroke: #b7cbb1; }
.tr { fill: #e9e5d9; stroke: #d0ccbf; }
.jp { fill: #ebe5da; stroke: #d3cdc1; }
.in { fill: #bedabd; stroke: #a0c4a3; }
.id { fill: #dae1cf; stroke: #c0c8b3; }
.legend {
  position: absolute;
  left: 7px;
  bottom: 12px;
  display: flex;
  align-items: center;
  gap: 8px;
  color: #000;
  font: 15px/20px "Liberation Sans", Arial, sans-serif;
}
.ramp { width: 268px; height: 14px; background: linear-gradient(90deg, #efe6dc, #4fbd74); }

.card-footer { padding: 8px 16px; border-top: 1px solid #cfd2d8; background: #f7f7f8; }
.offers-title { margin: 0 0 38px; line-height: 26px; text-align: center; }
.offers-title b { font-size: 16px; font-weight: 600; }
.offers { display: grid; grid-template-columns: 1fr 1fr; gap: 24px; }
.offer {
  height: 80px;
  border: 1px solid #d8dbe0;
  border-left: 4px solid #f9b115;
  border-radius: 6px;
}
```
